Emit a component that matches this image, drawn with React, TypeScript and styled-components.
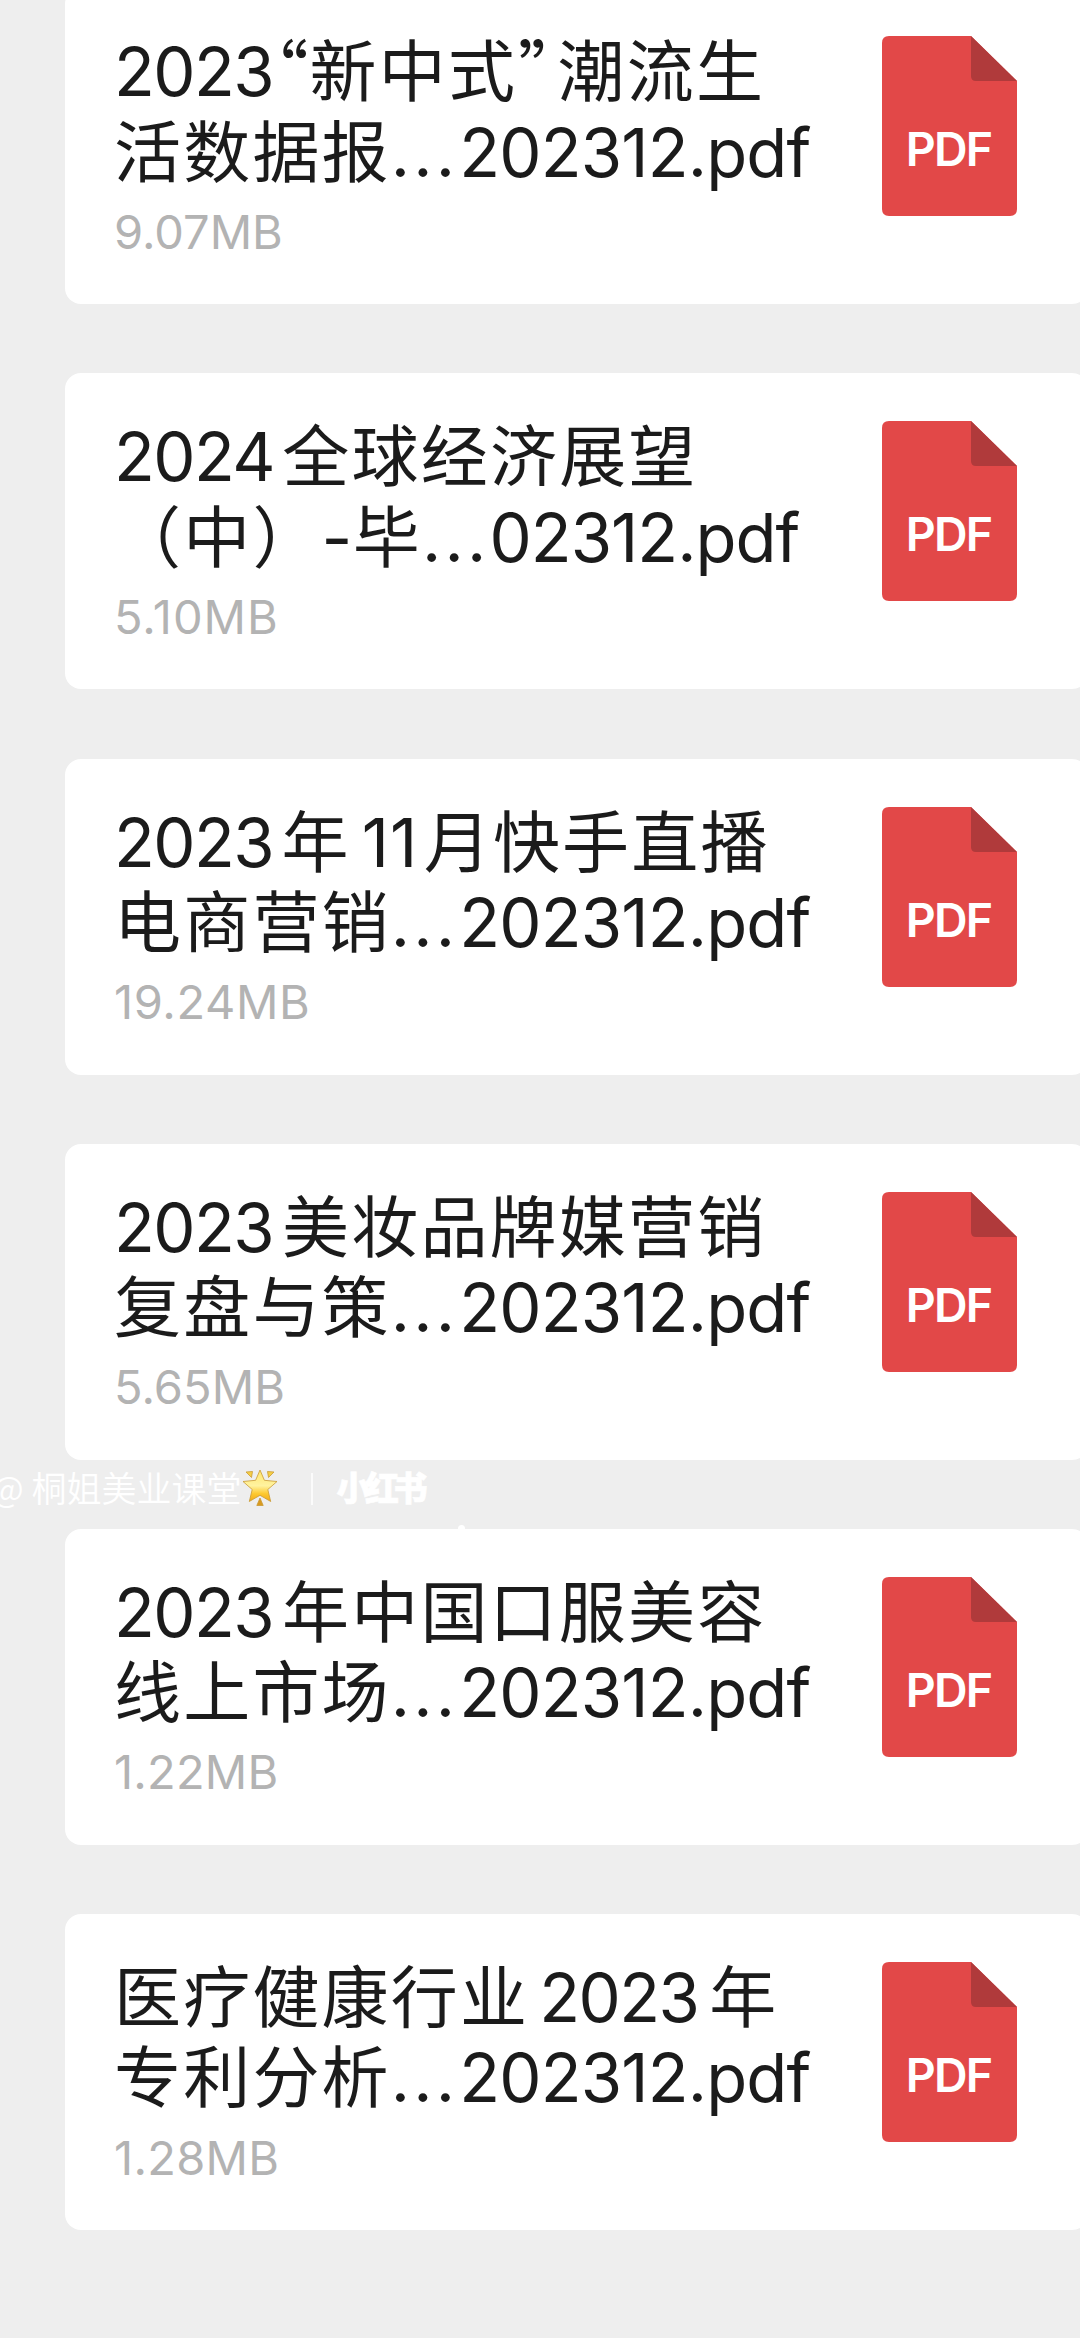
import React from 'react';
import styled, { createGlobalStyle } from 'styled-components';

const GlobalStyle = createGlobalStyle`
  body {
    margin: 0;
    background: #eeeeee;
  }
`;

const Page = styled.main`
  position: relative;
  box-sizing: border-box;
  width: 1080px;
  height: 2338px;
  overflow: hidden;
  background: #eeeeee;
  font-family: Inter, 'Noto Sans CJK SC', sans-serif;
`;

const FileList = styled.div`
  display: flex;
  flex-direction: column;
  gap: 69.1px;
  width: 1023px;
  margin-top: -11.7px;
  margin-left: 65px;
`;

const Card = styled.article`
  box-sizing: border-box;
  display: flex;
  flex: none;
  align-items: flex-start;
  justify-content: space-between;
  height: 316px;
  padding: 39px 71px 0 49px;
  border-radius: 16px;
  background: #ffffff;
`;

const Info = styled.div`
  display: flex;
  flex-direction: column;
`;

const TitleLine = styled.div`
  height: 80.3px;
  line-height: 80.3px;
  font-size: 67px;
  color: #1b1b1b;
  white-space: pre;
`;

const Latin = styled.span<{ $gap?: number; $tracking?: number }>`
  margin-left: ${(p) => p.$gap ?? 0}px;
  letter-spacing: ${(p) => p.$tracking ?? -1.6}px;
`;

const Han = styled.span<{ $gap?: number }>`
  margin-left: ${(p) => p.$gap ?? 0}px;
  font-family: 'Noto Sans CJK SC', sans-serif;
  font-size: 67px;
  letter-spacing: 2.2px;
`;

const Quote = styled.span<{ $gap?: number }>`
  margin-left: ${(p) => p.$gap ?? 0}px;
  font-family: 'Noto Sans CJK SC', sans-serif;
  font-feature-settings: 'halt';
`;

const Size = styled.div<{ $tracking: number }>`
  margin-top: 4.2px;
  height: 80px;
  line-height: 80px;
  font-size: 47px;
  letter-spacing: ${(p) => p.$tracking}px;
  color: #b3b3b3;
`;

const FileIcon = styled.div`
  position: relative;
  flex: none;
  width: 135px;
  height: 180px;
  margin-top: 9px;
`;

const Sheet = styled.svg`
  display: block;
`;

const IconLabel = styled.span`
  position: absolute;
  top: 84px;
  left: -1px;
  width: 135px;
  line-height: 58px;
  text-align: center;
  font-size: 46.5px;
  font-weight: 600;
  letter-spacing: -1.8px;
  color: #ffffff;
`;

const Watermark = styled.div`
  position: absolute;
  top: 1463px;
  left: -9px;
  display: flex;
  align-items: center;
  height: 48px;
  color: #ffffff;
`;

const Author = styled.span`
  font-family: 'Noto Sans CJK SC', sans-serif;
  font-size: 35px;
  font-weight: 350;
  line-height: 48px;
  white-space: pre;
`;

const Divider = styled.span`
  width: 2px;
  height: 32px;
  margin: 4px 24px 0 33px;
  background: #fbfbfb;
`;

const Brand = styled.span`
  font-family: 'Noto Sans CJK SC', sans-serif;
  font-size: 34px;
  font-weight: 900;
  letter-spacing: -5.5px;
  line-height: 48px;
  -webkit-text-stroke: 0.6px #ffffff;
`;

const Speck = styled.span`
  position: absolute;
  top: 1525px;
  left: 458px;
  width: 7px;
  height: 7px;
  border-radius: 50%;
  background: #ffffff;
`;

type Part = { text: string; kind: 'latin' | 'han' | 'quote'; gap?: number; tracking?: number };
type FileEntry = { lines: Part[][]; size: string; sizeTracking: number };

const n = (text: string, gap = 0, tracking?: number): Part => ({ text, kind: 'latin', gap, tracking });
const h = (text: string, gap = 0): Part => ({ text, kind: 'han', gap });
const q = (text: string, gap = 0): Part => ({ text, kind: 'quote', gap });
const dots = (): Part => n('...', 0, 3.2);
const tail = (text: string): Part => n(text, 1, -0.85);

const files: FileEntry[] = [
  {
    lines: [
      [n('2023'), q('“', 2), h('新中式', 1), q('”', 1), h('潮流生', 6)],
      [h('活数据报'), dots(), tail('202312.pdf')],
    ],
    size: '9.07MB',
    sizeTracking: 0,
  },
  {
    lines: [
      [n('2024'), h('全球经济展望', 8.5)],
      [h('（中）'), n('-', 0), h('毕', 2), dots(), n('02312.pdf', 0, -1)],
    ],
    size: '5.10MB',
    sizeTracking: 1,
  },
  {
    lines: [
      [n('2023'), h('年', 8.5), n('11', 11, 1), h('月快手直播', 5.5)],
      [h('电商营销'), dots(), tail('202312.pdf')],
    ],
    size: '19.24MB',
    sizeTracking: 0.6,
  },
  {
    lines: [
      [n('2023'), h('美妆品牌媒营销', 9)],
      [h('复盘与策'), dots(), tail('202312.pdf')],
    ],
    size: '5.65MB',
    sizeTracking: 0.1,
  },
  {
    lines: [
      [n('2023'), h('年中国口服美容', 9)],
      [h('线上市场'), dots(), tail('202312.pdf')],
    ],
    size: '1.22MB',
    sizeTracking: 0.2,
  },
  {
    lines: [
      [h('医疗健康行业'), n('2023', 10), h('年', 11)],
      [h('专利分析'), dots(), tail('202312.pdf')],
    ],
    size: '1.28MB',
    sizeTracking: 0.3,
  },
];

const TitlePart = ({ part }: { part: Part }) => {
  if (part.kind === 'latin') {
    return (
      <Latin $gap={part.gap} $tracking={part.tracking}>
        {part.text}
      </Latin>
    );
  }
  if (part.kind === 'quote') {
    return <Quote $gap={part.gap}>{part.text}</Quote>;
  }
  return <Han $gap={part.gap}>{part.text}</Han>;
};

const PdfIcon = () => (
  <FileIcon>
    <Sheet width="135" height="180" viewBox="0 0 135 180">
      <path
        d="M7 0H89L135 45V173Q135 180 128 180H7Q0 180 0 173V7Q0 0 7 0Z"
        fill="#e24848"
      />
      <path d="M89 0L135 45H94Q89 45 89 40Z" fill="#b03a3b" />
    </Sheet>
    <IconLabel>PDF</IconLabel>
  </FileIcon>
);

const GlowingStar = () => (
  <svg width="36" height="38" viewBox="0 0 36 38">
    <defs>
      <linearGradient id="starFill" x1="0" y1="0" x2="0" y2="1">
        <stop offset="0" stopColor="#ffe46a" />
        <stop offset="0.5" stopColor="#fff3a0" />
        <stop offset="0.75" stopColor="#fdc92f" />
        <stop offset="1" stopColor="#f0a818" />
      </linearGradient>
    </defs>
    <g stroke="#c99a35" strokeWidth="0.8" strokeLinejoin="round">
      <path d="M4 4L10.5 3.5L9.5 9.5Z" fill="#f6cf45" />
      <path d="M32 4L25.5 3.5L26.5 9.5Z" fill="#f6cf45" />
      <path d="M18 30L21.2 37.5H14.8Z" fill="#d99a1f" />
      <path
        d="M18 2L22.4 12.3L35 13.5L25.8 21.5L28.7 33.5L18 27.3L7.3 33.5L10.2 21.5L1 13.5L13.6 12.3Z"
        fill="url(#starFill)"
      />
    </g>
  </svg>
);

export default function App() {
  return (
    <Page>
      <GlobalStyle />
      <FileList>
        {files.map((file) => (
          <Card key={file.size}>
            <Info>
              {file.lines.map((line, i) => (
                <TitleLine key={i}>
                  {line.map((part, j) => (
                    <TitlePart key={j} part={part} />
                  ))}
                </TitleLine>
              ))}
              <Size $tracking={file.sizeTracking}>{file.size}</Size>
            </Info>
            <PdfIcon />
          </Card>
        ))}
      </FileList>
      <Watermark>
        <Author>@ 桐姐美业课堂</Author>
        <GlowingStar />
        <Divider />
        <Brand>小红书</Brand>
      </Watermark>
      <Speck />
    </Page>
  );
}
